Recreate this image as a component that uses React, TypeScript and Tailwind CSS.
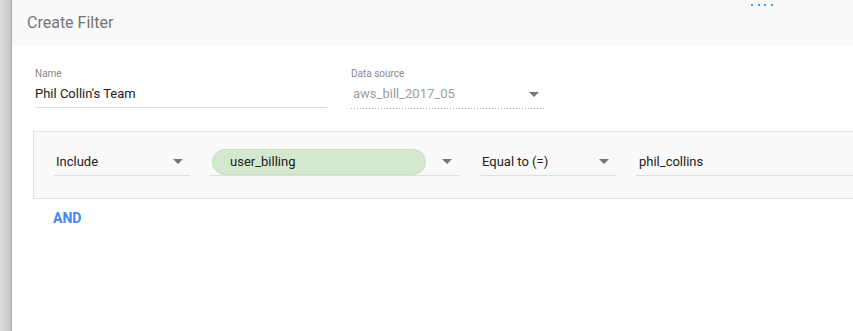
function Arrow() {
  return <span className="inline-block w-0 h-0 border-x-[5px] border-x-transparent border-t-[5px] border-t-[#757575]" />;
}

function Select({ label, className }: { label: string; className: string }) {
  return (
    <div className={`flex items-center justify-between h-[28px] border-b border-[#dedede] pl-[2px] pr-[7px] ${className}`}>
      <span className="text-[13px] text-[#212121]">{label}</span>
      <Arrow />
    </div>
  );
}

function App() {
  return (
    <div
      className="relative flex w-screen h-screen overflow-hidden bg-white"
      style={{ fontFamily: "Roboto, 'Liberation Sans', sans-serif" }}
    >
      <div className="w-[12px] shrink-0 bg-linear-to-r from-[#dedede] to-[#c6c6c6] border-r border-[#a9a9a9]" />

      <div className="flex-1 min-w-0 flex flex-col">
        <header className="h-[46px] shrink-0 bg-[#f9f9f9] flex items-center px-[15px]">
          <h1 className="text-[16px] text-[#757575]">Create Filter</h1>
        </header>

        <div className="pl-[21px] pt-[22px]">
          <div className="flex gap-[24px] pl-[2px]">
            <div className="w-[292px]">
              <div className="text-[10px] leading-[12px] text-[#888]">Name</div>
              <div className="h-[28px] flex items-center border-b border-[#dedede] text-[13px] text-[#212121]">
                Phil Collin's Team
              </div>
            </div>
            <div className="w-[194px]">
              <div className="text-[10px] leading-[12px] text-[#888]">Data source</div>
              <div className="h-[28px] flex items-center justify-between pl-[2px] pr-[6px] text-[13px] text-[#9e9e9e]">
                <span>aws_bill_2017_05</span>
                <Arrow />
              </div>
              <div className="h-px bg-[linear-gradient(to_right,#aaa_34%,transparent_0%)] bg-[length:3px_1px] bg-repeat-x" />
            </div>
          </div>

          <div className="mt-[22px] w-[880px] border border-[#e2e2e2] bg-[#f9f9f9] px-[20px] pt-[16px] pb-[22px]">
            <div className="flex gap-[20px]">
              <Select label="Include" className="w-[136px]" />
              <div className="w-[250px] h-[28px] flex items-center justify-between border-b border-[#dedede] pl-[2px] pr-[8px]">
                <span className="w-[214px] h-[26px] rounded-full bg-[#d3e8cf] border border-[#c6e0c1] flex items-center pl-[17px] text-[13px] text-[#212121]">
                  user_billing
                </span>
                <Arrow />
              </div>
              <Select label="Equal to (=)" className="w-[136px]" />
              <div className="flex-1 h-[28px] flex items-center border-b border-[#dedede] pl-[3px] text-[13px] text-[#212121]">
                phil_collins
              </div>
            </div>
          </div>

          <button className="mt-[11px] ml-[20px] text-[14px] leading-[16px] font-bold text-[#4285f4]">AND</button>
        </div>
      </div>

      <div className="absolute top-[4px] left-[751px] flex gap-[4.5px]">
        <span className="w-[2px] h-[2px] bg-[#3d9df5]" />
        <span className="w-[2px] h-[2px] bg-[#3d9df5]" />
        <span className="w-[2px] h-[2px] bg-[#3d9df5]" />
        <span className="w-[2px] h-[2px] bg-[#3d9df5]" />
      </div>
    </div>
  );
}

export default App;
